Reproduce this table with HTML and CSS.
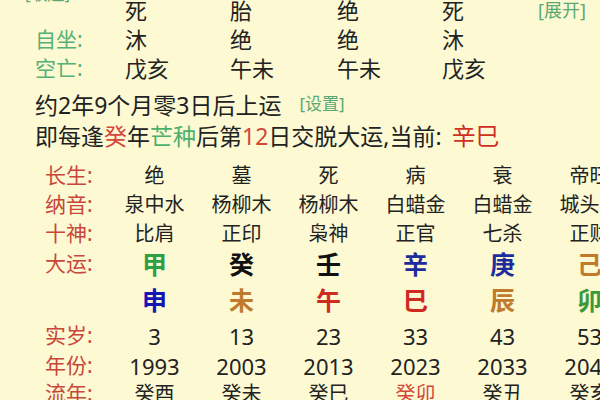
FILE: index.html
```html
<!DOCTYPE html>
<html lang="zh">
<head>
<meta charset="utf-8">
<title>大运</title>
<link rel="stylesheet" href="styles.css">
</head>
<body>
<div class="page">
  <div class="cut-link">[收起]</div>
  <div class="pillars">
    <span class="lbl"></span><span>死</span><span>胎</span><span>绝</span><span>死</span><span class="link">[展开]</span>
    <span class="lbl">自坐:</span><span>沐</span><span>绝</span><span>绝</span><span>沐</span><span></span>
    <span class="lbl">空亡:</span><span>戊亥</span><span>午未</span><span>午未</span><span>戊亥</span><span></span>
  </div>
  <p class="line l1">约2年9个月零3日后上运<span class="link set">[设置]</span></p>
  <p class="line l2">即每逢<span class="red-soft">癸</span>年<span class="green">芒种</span>后第<span class="red-soft">12</span>日交脱大运,当前: <span class="cur">辛巳</span></p>

  <div class="yun">
    <span class="tl">长生:</span><span>绝</span><span>墓</span><span>死</span><span>病</span><span>衰</span><span>帝旺</span>
    <span class="tl">纳音:</span><span>泉中水</span><span>杨柳木</span><span>杨柳木</span><span>白蜡金</span><span>白蜡金</span><span>城头土</span>
    <span class="tl">十神:</span><span>比肩</span><span>正印</span><span>枭神</span><span>正官</span><span>七杀</span><span>正财</span>
    <span class="tl">大运:</span><span class="gz c-green">甲</span><span class="gz c-black">癸</span><span class="gz c-black">壬</span><span class="gz c-navy">辛</span><span class="gz c-navy">庚</span><span class="gz c-brown">己</span>
    <span class="tl"></span><span class="gz c-blue">申</span><span class="gz c-brown">未</span><span class="gz c-red">午</span><span class="gz c-red">巳</span><span class="gz c-brown">辰</span><span class="gz c-green2">卯</span>
    <span class="tl">实岁:</span><span class="num">3</span><span class="num">13</span><span class="num">23</span><span class="num">33</span><span class="num">43</span><span class="num">53</span>
    <span class="tl">年份:</span><span class="num">1993</span><span class="num">2003</span><span class="num">2013</span><span class="num">2023</span><span class="num">2033</span><span class="num">2043</span>
    <span class="tl">流年:</span><span>癸酉</span><span>癸未</span><span>癸巳</span><span class="red-soft">癸卯</span><span>癸丑</span><span>癸亥</span>
  </div>
</div>
</body>
</html>
```

FILE: styles.css
```css
html, body {
  margin: 0;
  padding: 0;
  background: #fcf9d3;
}

.page {
  width: 600px;
  overflow: hidden;
  font-family: "Noto Sans", "Noto Sans CJK SC", "Noto Sans CJK JP", sans-serif;
  color: #222;
}

.cut-link {
  margin-top: -16px;
  margin-bottom: -8px;
  height: 20px;
  line-height: 20px;
  padding-left: 25px;
  font-size: 17px;
  color: #5aa872;
}

.link {
  color: #5aa872;
  font-size: 18px;
}

.pillars {
  display: grid;
  grid-template-columns: 90px 105px 107px 105px 96px auto;
  grid-auto-rows: 29px;
  padding-left: 35px;
  font-size: 22px;
  line-height: 29px;
}

.pillars .lbl {
  color: #56b075;
  font-size: 21px;
}

.line {
  margin: 0;
  padding-left: 35px;
  font-size: 23px;
  white-space: nowrap;
}

.l1 {
  margin-top: 6px;
  height: 32px;
  line-height: 32px;
}

.l2 {
  height: 30px;
  line-height: 30px;
}

.set {
  margin-left: 18px;
  font-size: 17px;
  vertical-align: top;
  line-height: 30px;
}

.red-soft { color: #d2473a; }
.green { color: #4bb06e; }
.cur {
  color: #d0301f;
  font-size: 24px;
  margin-left: 4px;
}

.yun {
  margin-top: 10px;
  display: grid;
  grid-template-columns: 66px repeat(6, 87px);
  grid-template-rows: 29px 29px 29px 32px 40px 32px 28px 28px;
  padding-left: 45px;
  font-size: 20px;
  text-align: center;
  align-items: center;
  white-space: nowrap;
}

.yun > span {
  line-height: 1.2;
}

.yun .tl {
  text-align: left;
  color: #c8473a;
  font-size: 21px;
}

.yun .num {
  font-size: 22px;
}

.gz {
  font-size: 25px;
  font-weight: 700;
}

.c-green { color: #2f9e44; }
.c-green2 { color: #3a9a3a; }
.c-black { color: #111; }
.c-navy { color: #1c2c9c; }
.c-blue { color: #1616b4; }
.c-brown { color: #c07a2c; }
.c-red { color: #cf2a1f; }
```
